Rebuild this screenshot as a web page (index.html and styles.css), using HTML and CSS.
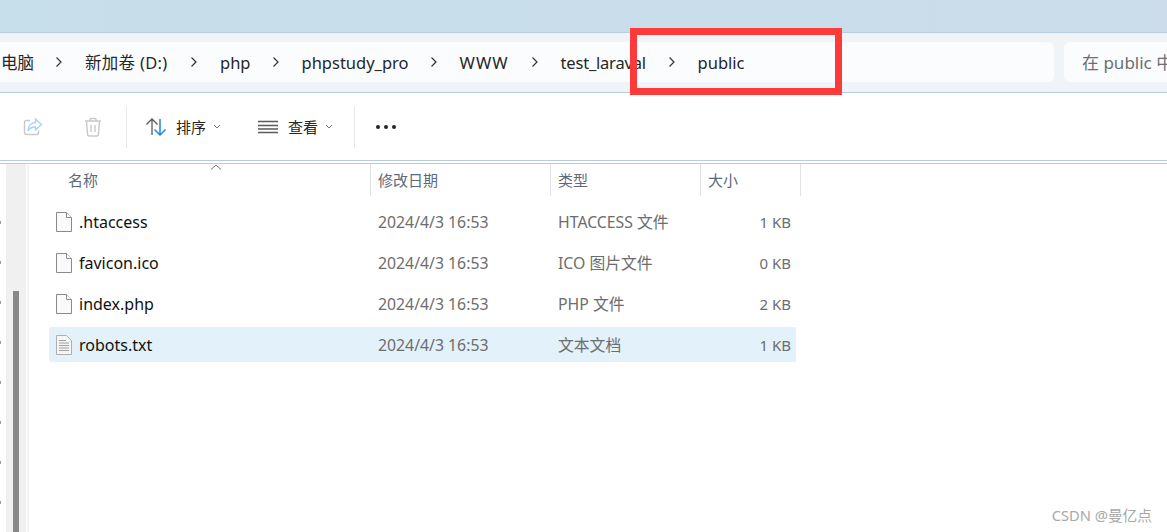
FILE: index.html
```html
<!DOCTYPE html>
<html lang="zh-CN">
<head>
<meta charset="utf-8">
<title>public</title>
<link rel="stylesheet" href="styles.css">
</head>
<body>
<div class="window">
  <div class="titlebar"></div>
  <div class="addressband">
    <nav class="crumbs">
      <span class="crumb first">电脑</span>
      <svg class="chev" viewBox="0 0 8 12"><path d="M1.500 1.500 6 6l-4.500 4.500"/></svg>
      <span class="crumb drive">新加卷 (D:)</span>
      <svg class="chev" viewBox="0 0 8 12"><path d="M1.500 1.500 6 6l-4.500 4.500"/></svg>
      <span class="crumb">php</span>
      <svg class="chev" viewBox="0 0 8 12"><path d="M1.500 1.500 6 6l-4.500 4.500"/></svg>
      <span class="crumb">phpstudy_pro</span>
      <svg class="chev" viewBox="0 0 8 12"><path d="M1.500 1.500 6 6l-4.500 4.500"/></svg>
      <span class="crumb www">WWW</span>
      <svg class="chev" viewBox="0 0 8 12"><path d="M1.500 1.500 6 6l-4.500 4.500"/></svg>
      <span class="crumb laravel">test_laraval</span>
      <svg class="chev" viewBox="0 0 8 12"><path d="M1.500 1.500 6 6l-4.500 4.500"/></svg>
      <span class="crumb">public</span>
    </nav>
    <div class="search">在 public 中</div>
  </div>
  <div class="toolbar">
    <svg class="tool share" viewBox="0 0 20 20"><path class="g" d="M7 3.500H3.500a2 2 0 0 0-2 2v10a2 2 0 0 0 2 2h10a2 2 0 0 0 2-2v-2"/><path class="b" d="M12.500 2 18.500 7.500l-6 5.500V10C9 10 6.500 11 5 14c0-5 3-8.500 7.500-8.500z"/></svg>
    <svg class="tool trash" viewBox="0 0 20 20"><path class="g" d="M2 4h16M7 4V2.500a1 1 0 0 1 1-1h4a1 1 0 0 1 1 1V4M3.500 4l1 13a2 2 0 0 0 2 2h7a2 2 0 0 0 2-2l1-13M8 8v7M12 8v7"/></svg>
    <span class="sep first-sep"></span>
    <svg class="tool sort" viewBox="0 0 22 20"><path class="d" d="M7 18V2M1.500 7.500 7 2l5.500 5.500"/><path class="bl" d="M15 2v16M9.500 12.500 15 18l5.500-5.500"/></svg>
    <span class="label sort-label">排序</span>
    <svg class="drop" viewBox="0 0 8 5"><path d="M1 1l3 3 3-3"/></svg>
    <svg class="tool view" viewBox="0 0 20 14"><path class="d" d="M0 1.500h20M0 5.500h20M0 9h20M0 12.500h20"/></svg>
    <span class="label view-label">查看</span>
    <svg class="drop" viewBox="0 0 8 5"><path d="M1 1l3 3 3-3"/></svg>
    <span class="sep second-sep"></span>
    <span class="dots"><i></i><i></i><i></i></span>
  </div>
  <div class="content">
    <aside class="sidebar">
      <div class="pins"><i></i><i></i><i></i><i></i><i></i><i></i><i></i><i></i></div>
      <div class="track"><div class="thumb"></div></div>
    </aside>
    <main class="files">
      <div class="head">
        <div class="hcell name-h">名称<svg class="caret" viewBox="0 0 12 6"><path d="M1 5.500 6 1l5 4.500"/></svg></div>
        <div class="hcell">修改日期</div>
        <div class="hcell">类型</div>
        <div class="hcell">大小</div>
      </div>
      <div class="rows">
        <div class="row">
          <div class="name"><svg class="ficon" viewBox="0 0 16 20"><path d="M.5.500h10l5 5v14H.500z"/><path d="M10.500.500v5h5"/></svg>.htaccess</div>
          <div class="cell">2024/4/3 16:53</div><div class="cell">HTACCESS 文件</div><div class="size">1 KB</div>
        </div>
        <div class="row">
          <div class="name"><svg class="ficon" viewBox="0 0 16 20"><path d="M.5.500h10l5 5v14H.500z"/><path d="M10.500.500v5h5"/></svg>favicon.ico</div>
          <div class="cell">2024/4/3 16:53</div><div class="cell">ICO 图片文件</div><div class="size">0 KB</div>
        </div>
        <div class="row">
          <div class="name"><svg class="ficon" viewBox="0 0 16 20"><path d="M.5.500h10l5 5v14H.500z"/><path d="M10.500.500v5h5"/></svg>index.php</div>
          <div class="cell">2024/4/3 16:53</div><div class="cell">PHP 文件</div><div class="size">2 KB</div>
        </div>
        <div class="row selected">
          <div class="name"><svg class="ficon txt" viewBox="0 0 16 20"><path d="M.5.500h10l5 5v14H.500z"/><path class="lines" d="M3 5.500h7M3 8h10M3 10.500h10M3 13h10M3 15.500h10"/></svg>robots.txt</div>
          <div class="cell">2024/4/3 16:53</div><div class="cell">文本文档</div><div class="size">1 KB</div>
        </div>
      </div>
    </main>
  </div>
  <div class="highlight"></div>
  <div class="watermark">CSDN @曼亿点</div>
</div>
</body>
</html>
```

FILE: styles.css
```css
* { box-sizing: border-box; }
html, body { margin: 0; height: 100%; overflow: hidden; background: #fff; }
body { font-family: "Noto Sans", "Noto Sans CJK SC", sans-serif; color: #1c1c1c; }
.window { position: relative; width: 1167px; height: 532px; overflow: hidden; display: flex; flex-direction: column; }

.titlebar { height: 32px; flex: none; background: linear-gradient(90deg, #c7dfeb, #c9deea 50%, #ccdcea); }

.addressband { height: 61px; flex: none; display: flex; gap: 10px; padding: 9px 0 10px; background: #eff4f8; border-top: 1px solid #b7cddd; border-bottom: 1px solid #b7cddd; }
.crumbs { width: 1054px; flex: none; display: flex; align-items: center; background: #fafcfe; border-radius: 0 6px 6px 0; font-size: 16.500px; color: #262626; white-space: nowrap; }
.crumb { flex: none; }
.crumb.first { width: 34px; text-align: right; overflow: hidden; }
.crumb.drive { width: 84px; letter-spacing: .3px; }
.crumb.www { width: 50px; letter-spacing: 1px; }
.crumb.laravel { width: 86px; letter-spacing: -.2px; }
.chev { width: 8px; height: 12px; margin: 0 22px 0 21px; flex: none; fill: none; stroke: #333; stroke-width: 1.200; }
.search { flex: 1; background: #fafcfe; border-radius: 6px 0 0 6px; padding-left: 18px; font-size: 17px; line-height: 42px; color: #6f6f6f; white-space: nowrap; overflow: hidden; }

.toolbar { height: 68px; flex: none; display: flex; align-items: center; border-bottom: 1px solid #b7cddd; background: #fff; }
.tool { flex: none; fill: none; }
.g { stroke: #c9c9c9; stroke-width: 1.400; fill: none; }
.b { stroke: #a9d4f5; stroke-width: 1.400; fill: #fff; }
.d { stroke: #5a5a5a; stroke-width: 1.300; fill: none; }
.bl { stroke: #1e88dc; stroke-width: 1.500; fill: none; }
.share { width: 20px; height: 20px; margin-left: 23px; }
.trash { width: 20px; height: 20px; margin-left: 40px; }
.sep { width: 1px; height: 42px; background: #e8e8e8; flex: none; }
.first-sep { margin-left: 23px; }
.sort { width: 22px; height: 20px; margin-left: 18px; }
.label { font-size: 15px; color: #262626; margin-left: 9px; width: 30px; flex: none; }
.view-label { margin-left: 10px; }
.drop { width: 8px; height: 5px; flex: none; margin-left: 7px; fill: none; stroke: #777; stroke-width: 1; }
.view { width: 20px; height: 14px; margin-left: 37px; }
.second-sep { margin-left: 21px; }
.dots { display: flex; gap: 4px; margin-left: 21px; }
.dots i { width: 4px; height: 4px; border-radius: 50%; background: #262626; }

.content { flex: 1; display: flex; min-height: 0; border-top: 2px solid #fff; position: relative; }
.sidebar { width: 29px; flex: none; display: flex; padding-left: 6px; border-right: 2px solid #f3f3f3; position: relative; border-top: 1px solid #c8c8c8; }
.track { width: 20px; background: #f0f0f0; padding: 127px 7px 0; }
.thumb { height: 100%; background: #888; }
.pins { position: absolute; left: 0; top: 57px; display: flex; flex-direction: column; gap: 37px; }
.pins i { display: block; width: 1px; height: 3px; background: #8fa5b3; }

.files { flex: 1; min-width: 0; border-top: 1px solid #c8c8c8; }
.head { display: grid; grid-template-columns: 342px 180px 150px 100px; height: 32px; font-size: 15px; color: #5b6a7c; }
.hcell { border-right: 1px solid #e2e2e2; padding-left: 7px; line-height: 32px; position: relative; }
.name-h { padding-left: 39px; }
.caret { position: absolute; left: 181px; top: 0; width: 12px; height: 6px; fill: none; stroke: #777; stroke-width: 1; }

.rows { display: flex; flex-direction: column; gap: 6px; margin: 8px 0 0 20px; width: 747px; }
.row { display: grid; grid-template-columns: 329px 180px 150px 88px; height: 35px; align-items: center; border-radius: 2px; font-size: 15.800px; color: #6d6d6d; }
.row.selected { background: #e3f1fb; }
.name { display: flex; align-items: center; gap: 7px; padding-left: 7px; font-size: 16px; color: #111; }
.ficon { width: 16px; height: 20px; flex: none; fill: #fafafa; stroke: #8a8a8a; stroke-width: 1; }
.txt { fill: #f5f5f5; stroke: #b0b0b0; }
.lines { stroke: #a0a0a0; }
.size { text-align: right; padding-right: 5px; font-size: 15px; }

.highlight { position: absolute; left: 630px; top: 28px; width: 212px; height: 67px; border: 7px solid #fd3a3a; }
.watermark { position: absolute; right: 15px; top: 504px; font-size: 14.700px; color: #a9a9a9; white-space: nowrap; }
```
